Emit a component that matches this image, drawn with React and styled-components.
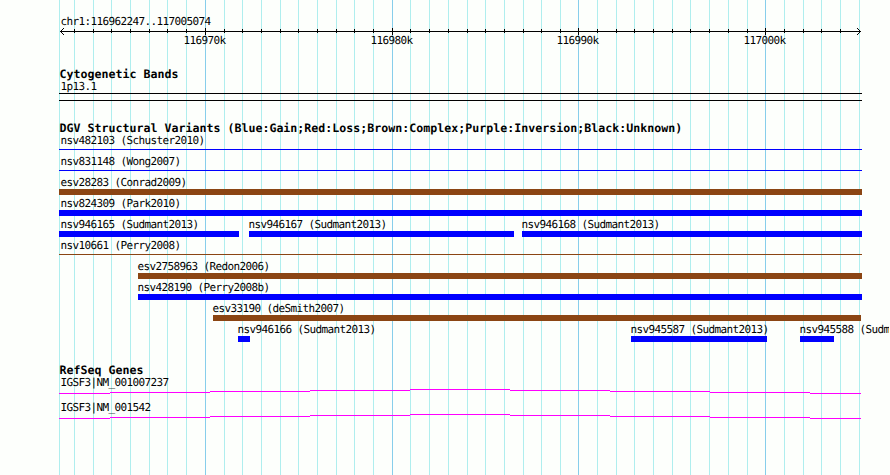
import React from 'react';
import styled, { createGlobalStyle } from 'styled-components';

const GlobalStyle = createGlobalStyle`
  body {
    margin: 0;
    background: #fdfffc;
  }
`;

const TRACK_LEFT = 59;

const minorLines = [
  59, 74, 93, 111, 130, 149, 167, 186, 224, 242, 261, 280, 298, 317, 336, 354,
  373, 410, 429, 448, 467, 485, 504, 523, 541, 560, 597, 616, 634, 653, 672,
  690, 709, 728, 747, 784, 803, 821, 840, 859,
];

const majorLines = [
  { x: 205, label: '116970k' },
  { x: 392, label: '116980k' },
  { x: 578, label: '116990k' },
  { x: 765, label: '117000k' },
];

const variantRows = [
  [{ name: 'nsv482103 (Schuster2010)', start: 59, end: 862, color: '#0000ff', thin: true }],
  [{ name: 'nsv831148 (Wong2007)', start: 59, end: 862, color: '#0000ff', thin: true }],
  [{ name: 'esv28283 (Conrad2009)', start: 59, end: 862, color: '#8b4513' }],
  [{ name: 'nsv824309 (Park2010)', start: 59, end: 862, color: '#0000ff' }],
  [
    { name: 'nsv946165 (Sudmant2013)', start: 59, end: 239, color: '#0000ff' },
    { name: 'nsv946167 (Sudmant2013)', start: 249, end: 514, color: '#0000ff' },
    { name: 'nsv946168 (Sudmant2013)', start: 522, end: 862, color: '#0000ff' },
  ],
  [{ name: 'nsv10661 (Perry2008)', start: 59, end: 862, color: '#8b4513', thin: true }],
  [{ name: 'esv2758963 (Redon2006)', start: 138, end: 862, color: '#8b4513' }],
  [{ name: 'nsv428190 (Perry2008b)', start: 138, end: 862, color: '#0000ff' }],
  [{ name: 'esv33190 (deSmith2007)', start: 213, end: 861, color: '#8b4513' }],
  [
    { name: 'nsv946166 (Sudmant2013)', start: 238, end: 250, color: '#0000ff' },
    { name: 'nsv945587 (Sudmant2013)', start: 631, end: 767, color: '#0000ff' },
    { name: 'nsv945588 (Sudmant2013)', start: 800, end: 834, color: '#0000ff' },
  ],
];

const genes = ['IGSF3|NM_001007237', 'IGSF3|NM_001542'];

const Browser = styled.div`
  display: grid;
  width: 889px;
  height: 475px;
  overflow: hidden;
  color: #000;
  font-family: 'DejaVu Sans Mono', monospace;
  font-size: 11px;
  letter-spacing: -0.622px;
  text-rendering: geometricPrecision;
  white-space: pre;
`;

const GridLines = styled.svg`
  grid-area: 1 / 1;
  display: block;
`;

const Tracks = styled.div`
  grid-area: 1 / 1;
  display: flex;
  flex-direction: column;
  min-width: 0;
  padding-left: ${TRACK_LEFT}px;
`;

const Label = styled.div`
  height: 13px;
  line-height: 13px;
  margin-left: ${(props) => props.$indent ?? 1.5}px;
`;

const Region = styled(Label)`
  margin-top: 15px;
`;

const Axis = styled.svg`
  display: block;
  flex: none;
`;

const TickLabels = styled.div`
  display: flex;
  height: 13px;
  line-height: 13px;
  margin-top: -1px;
`;

const TickLabel = styled.span`
  flex: none;
  width: 42px;
`;

const Title = styled.h2`
  height: 13px;
  margin: ${(props) => props.$gap}px 0 0 0.5px;
  font-size: 11.6px;
  font-weight: bold;
  letter-spacing: 0.016px;
  line-height: 14px;
`;

const Band = styled.div`
  width: 803px;
  height: 6px;
  border-top: 1px solid #000;
  border-bottom: 1px solid #000;
`;

const VariantRow = styled.div`
  display: flex;
  height: 21px;
`;

const Feature = styled.div`
  flex: none;
`;

const Bar = styled.div`
  height: ${(props) => (props.$thin ? 1 : 6)}px;
  margin-top: ${(props) => (props.$thin ? 2 : 0)}px;
  background: ${(props) => props.$color};
`;

const Gene = styled.div`
  height: 25px;
`;

const GeneLine = styled.svg`
  display: block;
`;

const Grid = () => (
  <GridLines width="889" height="475" shapeRendering="crispEdges">
    {minorLines.map((x) => (
      <rect key={x} x={x} width="1" height="475" fill="#afeeee" />
    ))}
    {majorLines.map(({ x }) => (
      <rect key={x} x={x} width="1" height="475" fill="#87ceeb" />
    ))}
  </GridLines>
);

const Ruler = () => (
  <>
    <Axis width="803" height="7" shapeRendering="crispEdges">
      <rect x="1" y="3" width="801" height="1" />
      {minorLines.slice(1, -1).map((x) => (
        <rect key={x} x={x - TRACK_LEFT} y="1" width="1" height="4" />
      ))}
      {majorLines.map(({ x }) => (
        <rect key={x} x={x - TRACK_LEFT} y="0" width="1" height="7" />
      ))}
      {[1, 2, 3].map((step) => (
        <g key={step}>
          <rect x={1 + step} y={3 - step} width="1" height="1" />
          <rect x={1 + step} y={3 + step} width="1" height="1" />
          <rect x={801 - step} y={3 - step} width="1" height="1" />
          <rect x={801 - step} y={3 + step} width="1" height="1" />
        </g>
      ))}
    </Axis>
    <TickLabels>
      {majorLines.map(({ x, label }, i) => {
        const previous = i === 0 ? TRACK_LEFT : majorLines[i - 1].x + 20.5;
        return (
          <TickLabel key={label} style={{ marginLeft: x - 21.5 - previous }}>
            {label}
          </TickLabel>
        );
      })}
    </TickLabels>
  </>
);

const Variants = ({ features }) => (
  <VariantRow>
    {features.map(({ name, start, end, color, thin }, i) => {
      const previous = i === 0 ? TRACK_LEFT : features[i - 1].end;
      return (
        <Feature key={name} style={{ marginLeft: start - previous, width: end - start }}>
          <Label $indent={start === TRACK_LEFT ? 1.5 : -0.5}>{name}</Label>
          <Bar $color={color} $thin={thin} />
        </Feature>
      );
    })}
  </VariantRow>
);

const App = () => (
  <>
    <GlobalStyle />
    <Browser>
      <Grid />
      <Tracks>
        <Region>chr1:116962247..117005074</Region>
        <Ruler />
        <Title $gap={20}>Cytogenetic Bands</Title>
        <Label>1p13.1</Label>
        <Band />
        <Title $gap={20}>
          DGV Structural Variants (Blue:Gain;Red:Loss;Brown:Complex;Purple:Inversion;Black:Unknown)
        </Title>
        {variantRows.map((features) => (
          <Variants key={features[0].name} features={features} />
        ))}
        <Title $gap={19}>RefSeq Genes</Title>
        {genes.map((name) => (
          <Gene key={name}>
            <Label>{name}</Label>
            {/* intron arc, drawn in whole pixel steps */}
            <GeneLine width="802" height="5" shapeRendering="crispEdges">
              {[4, 3, 2, 1, 0, 1, 2, 3, 4].map((y, i) => {
                const from = i === 0 ? 0 : i * 100 - 49;
                const to = i === 8 ? 802 : i * 100 + 51;
                return <rect key={i} x={from} y={y} width={to - from} height="1" fill="#ff00ff" />;
              })}
            </GeneLine>
          </Gene>
        ))}
      </Tracks>
    </Browser>
  </>
);

export default App;
